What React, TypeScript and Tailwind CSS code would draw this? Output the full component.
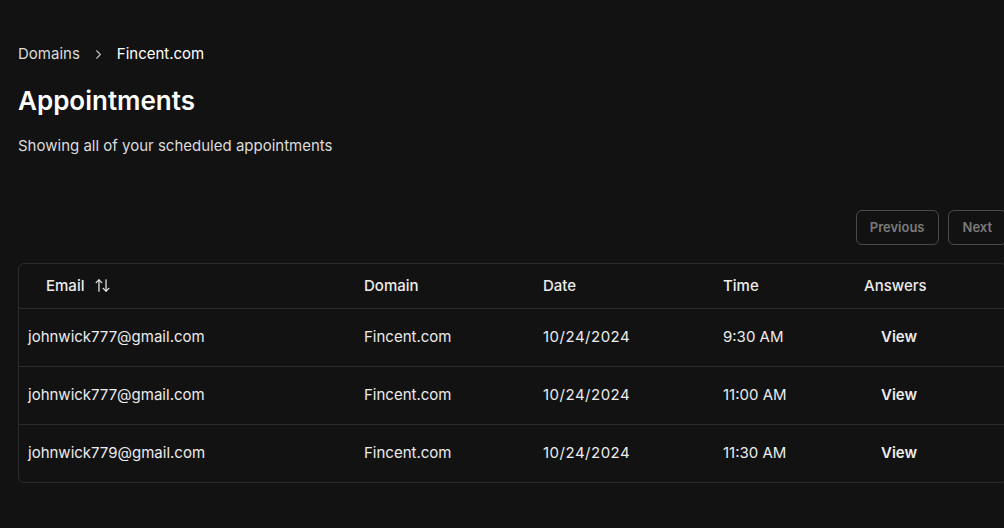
import React from "react";
import { ArrowUpDown, ChevronRight } from "lucide-react";

const rows = [
  { email: "johnwick777@gmail.com", domain: "Fincent.com", date: "10/24/2024", time: "9:30 AM" },
  { email: "johnwick777@gmail.com", domain: "Fincent.com", date: "10/24/2024", time: "11:00 AM" },
  { email: "johnwick779@gmail.com", domain: "Fincent.com", date: "10/24/2024", time: "11:30 AM" },
];

export default function App() {
  return (
    <div
      className="w-screen min-h-screen overflow-hidden bg-[#121212] text-[#ececec]"
      style={{ fontFamily: "Inter, 'Noto Sans', sans-serif" }}
    >
      <div className="w-[989px] ml-[18px] pt-[44px]">
        <nav className="flex items-center gap-[11px] text-[15px] leading-5 text-[#dcdcdc]">
          <span>Domains</span>
          <ChevronRight size={15} strokeWidth={1.75} className="text-[#bdbdbd]" />
          <span className="text-white">Fincent.com</span>
        </nav>
        <h1 className="mt-[21px] text-[26px] leading-8 font-semibold text-white">Appointments</h1>
        <p className="mt-[19px] text-[15px] leading-5 text-[#dcdcdc]">Showing all of your scheduled appointments</p>

        <div className="mt-[54px] flex justify-end gap-[9px]">
          <button className="h-[35px] px-[13px] rounded-md border border-[#4a4a4a] text-[13px] font-semibold text-[#7a7a7a]">
            Previous
          </button>
          <button className="h-[35px] px-[14px] rounded-md border border-[#4a4a4a] text-[13px] font-semibold text-[#7a7a7a]">
            Next
          </button>
        </div>

        <div className="mt-[18px] rounded-md border border-[#2b2b2b]">
          <table className="w-full table-fixed text-[15px] border-collapse">
            <thead>
              <tr className="h-[44px] border-b border-[#2b2b2b] text-left">
                <th className="w-[345px] pl-[27px] font-medium">
                  <span className="flex items-center gap-[10px]">
                    Email
                    <ArrowUpDown size={17} strokeWidth={1.75} />
                  </span>
                </th>
                <th className="w-[179px] font-medium">Domain</th>
                <th className="w-[180px] font-medium">Date</th>
                <th className="w-[141px] font-medium">Time</th>
                <th className="font-medium">Answers</th>
              </tr>
            </thead>
            <tbody>
              {rows.map((r, i) => (
                <tr key={i} className={`h-[58px] ${i < rows.length - 1 ? "border-b border-[#2b2b2b]" : ""}`}>
                  <td className="pl-[9px]">{r.email}</td>
                  <td>{r.domain}</td>
                  <td className="tracking-[0.5px]">{r.date}</td>
                  <td>{r.time}</td>
                  <td className="pl-[17px] font-semibold">View</td>
                </tr>
              ))}
            </tbody>
          </table>
        </div>
      </div>
    </div>
  );
}
